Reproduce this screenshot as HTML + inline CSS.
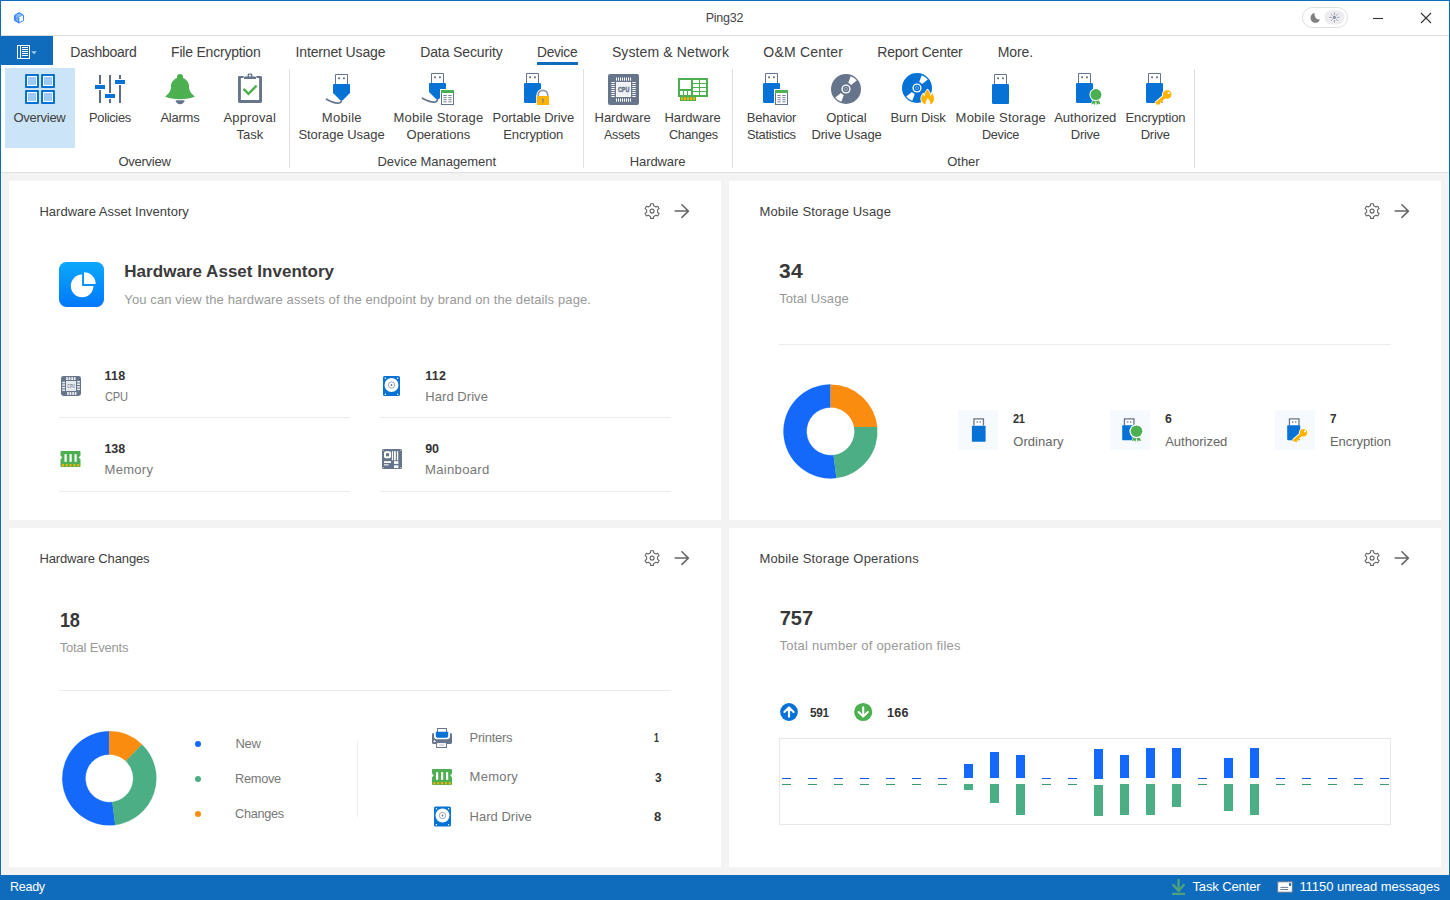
<!DOCTYPE html>
<html lang="en"><head><meta charset="utf-8"><title>Ping32</title>
<style>
html,body{margin:0;padding:0}
body{width:1450px;height:900px;position:relative;overflow:hidden;background:#f3f3f3;font-family:"Liberation Sans",sans-serif;font-size:13px}
svg{display:block;overflow:visible}
</style></head><body>
<div style="position:absolute;left:0px;top:0px;width:1450px;height:900px;background:#f3f3f3;"></div>
<div style="position:absolute;left:0px;top:0px;width:1450px;height:35px;background:#fff;"></div>
<div style="position:absolute;left:0px;top:35px;width:1450px;height:1px;background:#dcdcdc;"></div>
<div style="position:absolute;left:0px;top:36px;width:1450px;height:136px;background:#fff;"></div>
<div style="position:absolute;left:0px;top:172px;width:1450px;height:1px;background:#e0e0e0;"></div>
<div style="position:absolute;left:705.70px;top:8px;font-size:12.5px;line-height:20px;color:#444;white-space:nowrap;letter-spacing:-0.248px;">Ping32</div>
<svg style="position:absolute;left:0px;top:0px" width="40" height="35" viewBox="0 0 40 35"><g stroke-linejoin="round" transform="translate(19.05,17.85) scale(0.9) translate(-19,-17.8)"><path d="M19,12 L24,14.9 L19,17.8 L14,14.9 Z" fill="#69a7fb"/><path d="M14,14.9 L19,17.8 V23.6 L14,20.7 Z" fill="#4a91f8"/><path d="M15.6,16.9 L17.6,18 V21.6 L15.6,20.5 Z" fill="#a9ccfc"/><path d="M16.3,17.6 L17,18 V20.9 L16.3,20.5 Z" fill="#1f63d6"/><path d="M19,17.8 L24,14.9 V20.7 L19,23.6 Z" fill="#fff"/><path d="M16.4,13.5 L21.4,16.4 M21.6,13.5 L16.6,16.4" stroke="#cfe2fd" stroke-width="0.5" fill="none"/><path d="M19,12 L24,14.9 V20.7 L19,23.6 L14,20.7 V14.9 Z" fill="none" stroke="#2f7ff6" stroke-width="1.1"/><path d="M19,17.8 V23.6" stroke="#3b86f7" stroke-width="0.8" fill="none"/></g></svg>
<svg style="position:absolute;left:0px;top:0px" width="1450" height="35" viewBox="0 0 1450 35"><rect x="1302.5" y="7.5" width="45" height="20" rx="10" fill="#fff" stroke="#dedede"/><rect x="1324.5" y="10.2" width="20" height="14.3" rx="7.1" fill="#ededf0"/><path d="M1314.6,13 A4.9,4.9 0 1 0 1320,19.6 A5.2,5.2 0 0 1 1314.6,13 Z" fill="#808080"/><circle cx="1334.4" cy="17.4" r="1.55" fill="#8690a3"/><g stroke="#8690a3" stroke-width="0.8" stroke-linecap="round"><line x1="1337.30" y1="17.40" x2="1339.10" y2="17.40"/><line x1="1336.45" y1="19.45" x2="1337.72" y2="20.72"/><line x1="1334.40" y1="20.30" x2="1334.40" y2="22.10"/><line x1="1332.35" y1="19.45" x2="1331.08" y2="20.72"/><line x1="1331.50" y1="17.40" x2="1329.70" y2="17.40"/><line x1="1332.35" y1="15.35" x2="1331.08" y2="14.08"/><line x1="1334.40" y1="14.50" x2="1334.40" y2="12.70"/><line x1="1336.45" y1="15.35" x2="1337.72" y2="14.08"/></g></svg>
<svg style="position:absolute;left:0px;top:0px" width="1450" height="35" viewBox="0 0 1450 35"><g stroke="#333" stroke-width="1.1" fill="none"><line x1="1373" y1="18.5" x2="1383" y2="18.5"/><line x1="1421" y1="13" x2="1431" y2="23"/><line x1="1431" y1="13" x2="1421" y2="23"/></g></svg>
<div style="position:absolute;left:0px;top:36px;width:53px;height:29px;background:#0f6cbd;"></div>
<svg style="position:absolute;left:0px;top:0px" width="60" height="70" viewBox="0 0 60 70"><rect x="17.5" y="45.5" width="12" height="13" fill="none" stroke="#fff"/><line x1="20.5" y1="45.5" x2="20.5" y2="58.5" stroke="#fff"/><rect x="22" y="47" width="6" height="1" fill="#fff"/><rect x="22" y="49" width="6" height="1" fill="#fff"/><rect x="22" y="51" width="6" height="1" fill="#fff"/><rect x="22" y="53" width="6" height="1" fill="#fff"/><rect x="22" y="55" width="6" height="1" fill="#fff"/><path d="M31.2,51.3 H36.8 L34,54.2 Z" fill="#a8cbea"/></svg>
<div style="position:absolute;left:70.30px;top:42px;font-size:14px;line-height:20px;color:#404040;white-space:nowrap;letter-spacing:-0.258px;">Dashboard</div>
<div style="position:absolute;left:171.10px;top:42px;font-size:14px;line-height:20px;color:#404040;white-space:nowrap;letter-spacing:-0.215px;">File Encryption</div>
<div style="position:absolute;left:295.50px;top:42px;font-size:14px;line-height:20px;color:#404040;white-space:nowrap;letter-spacing:-0.142px;">Internet Usage</div>
<div style="position:absolute;left:420.20px;top:42px;font-size:14px;line-height:20px;color:#404040;white-space:nowrap;letter-spacing:-0.114px;">Data Security</div>
<div style="position:absolute;left:537.40px;top:42px;font-size:14px;line-height:20px;color:#404040;white-space:nowrap;letter-spacing:-0.300px;transform:scaleX(0.9813);transform-origin:0 0;">Device</div>
<div style="position:absolute;left:611.90px;top:42px;font-size:14px;line-height:20px;color:#404040;white-space:nowrap;letter-spacing:0.125px;">System &amp; Network</div>
<div style="position:absolute;left:763.30px;top:42px;font-size:14px;line-height:20px;color:#404040;white-space:nowrap;letter-spacing:0.203px;">O&amp;M Center</div>
<div style="position:absolute;left:877.30px;top:42px;font-size:14px;line-height:20px;color:#404040;white-space:nowrap;letter-spacing:-0.218px;">Report Center</div>
<div style="position:absolute;left:997.80px;top:42px;font-size:14px;line-height:20px;color:#404040;white-space:nowrap;letter-spacing:-0.142px;">More.</div>
<div style="position:absolute;left:537px;top:62px;width:41px;height:3px;background:#0f6cbd;"></div>
<div style="position:absolute;left:5px;top:68px;width:70px;height:80px;background:#cce4f7;"></div>
<div style="position:absolute;left:289px;top:69px;width:1px;height:99px;background:#e1e1e1;"></div>
<div style="position:absolute;left:583px;top:69px;width:1px;height:99px;background:#e1e1e1;"></div>
<div style="position:absolute;left:732px;top:69px;width:1px;height:99px;background:#e1e1e1;"></div>
<div style="position:absolute;left:1194px;top:69px;width:1px;height:99px;background:#e1e1e1;"></div>
<div style="position:absolute;left:13.40px;top:107px;font-size:13px;line-height:21px;color:#404040;white-space:nowrap;letter-spacing:-0.259px;">Overview</div>
<div style="position:absolute;left:88.60px;top:107px;font-size:13px;line-height:21px;color:#404040;white-space:nowrap;letter-spacing:-0.300px;transform:scaleX(0.9886);transform-origin:0 0;">Policies</div>
<div style="position:absolute;left:160.40px;top:107px;font-size:13px;line-height:21px;color:#404040;white-space:nowrap;letter-spacing:-0.226px;">Alarms</div>
<div style="position:absolute;left:223.50px;top:107px;font-size:13px;line-height:21px;color:#404040;white-space:nowrap;letter-spacing:0.145px;">Approval</div>
<div style="position:absolute;left:236.50px;top:124px;font-size:13px;line-height:21px;color:#404040;white-space:nowrap;letter-spacing:-0.027px;">Task</div>
<div style="position:absolute;left:321.80px;top:107px;font-size:13px;line-height:21px;color:#404040;white-space:nowrap;letter-spacing:0.300px;">Mobile</div>
<div style="position:absolute;left:298.40px;top:124px;font-size:13px;line-height:21px;color:#404040;white-space:nowrap;letter-spacing:-0.034px;">Storage Usage</div>
<div style="position:absolute;left:393.60px;top:107px;font-size:13px;line-height:21px;color:#404040;white-space:nowrap;letter-spacing:0.167px;">Mobile Storage</div>
<div style="position:absolute;left:406.50px;top:124px;font-size:13px;line-height:21px;color:#404040;white-space:nowrap;letter-spacing:0.014px;">Operations</div>
<div style="position:absolute;left:492.50px;top:107px;font-size:13px;line-height:21px;color:#404040;white-space:nowrap;letter-spacing:-0.043px;">Portable Drive</div>
<div style="position:absolute;left:503.30px;top:124px;font-size:13px;line-height:21px;color:#404040;white-space:nowrap;letter-spacing:-0.158px;">Encryption</div>
<div style="position:absolute;left:594.50px;top:107px;font-size:13px;line-height:21px;color:#404040;white-space:nowrap;letter-spacing:-0.008px;">Hardware</div>
<div style="position:absolute;left:604.40px;top:124px;font-size:13px;line-height:21px;color:#404040;white-space:nowrap;letter-spacing:-0.300px;transform:scaleX(0.9600);transform-origin:0 0;">Assets</div>
<div style="position:absolute;left:664.40px;top:107px;font-size:13px;line-height:21px;color:#404040;white-space:nowrap;letter-spacing:-0.008px;">Hardware</div>
<div style="position:absolute;left:668.60px;top:124px;font-size:13px;line-height:21px;color:#404040;white-space:nowrap;letter-spacing:-0.300px;transform:scaleX(0.9748);transform-origin:0 0;">Changes</div>
<div style="position:absolute;left:746.80px;top:107px;font-size:13px;line-height:21px;color:#404040;white-space:nowrap;letter-spacing:-0.241px;">Behavior</div>
<div style="position:absolute;left:747.20px;top:124px;font-size:13px;line-height:21px;color:#404040;white-space:nowrap;letter-spacing:-0.300px;transform:scaleX(0.9939);transform-origin:0 0;">Statistics</div>
<div style="position:absolute;left:826.20px;top:107px;font-size:13px;line-height:21px;color:#404040;white-space:nowrap;letter-spacing:-0.005px;">Optical</div>
<div style="position:absolute;left:811.40px;top:124px;font-size:13px;line-height:21px;color:#404040;white-space:nowrap;letter-spacing:-0.120px;">Drive Usage</div>
<div style="position:absolute;left:890.60px;top:107px;font-size:13px;line-height:21px;color:#404040;white-space:nowrap;letter-spacing:-0.140px;">Burn Disk</div>
<div style="position:absolute;left:955.60px;top:107px;font-size:13px;line-height:21px;color:#404040;white-space:nowrap;letter-spacing:0.213px;">Mobile Storage</div>
<div style="position:absolute;left:981.50px;top:124px;font-size:13px;line-height:21px;color:#404040;white-space:nowrap;letter-spacing:-0.300px;transform:scaleX(0.9734);transform-origin:0 0;">Device</div>
<div style="position:absolute;left:1054.20px;top:107px;font-size:13px;line-height:21px;color:#404040;white-space:nowrap;">Authorized</div>
<div style="position:absolute;left:1070.80px;top:124px;font-size:13px;line-height:21px;color:#404040;white-space:nowrap;letter-spacing:-0.289px;">Drive</div>
<div style="position:absolute;left:1125.60px;top:107px;font-size:13px;line-height:21px;color:#404040;white-space:nowrap;letter-spacing:-0.158px;">Encryption</div>
<div style="position:absolute;left:1140.70px;top:124px;font-size:13px;line-height:21px;color:#404040;white-space:nowrap;letter-spacing:-0.264px;">Drive</div>
<div style="position:absolute;left:118.40px;top:151px;font-size:13px;line-height:21px;color:#404040;white-space:nowrap;letter-spacing:-0.244px;">Overview</div>
<div style="position:absolute;left:377.50px;top:151px;font-size:13px;line-height:21px;color:#404040;white-space:nowrap;letter-spacing:-0.044px;">Device Management</div>
<div style="position:absolute;left:629.70px;top:151px;font-size:13px;line-height:21px;color:#404040;white-space:nowrap;letter-spacing:-0.079px;">Hardware</div>
<div style="position:absolute;left:947.30px;top:151px;font-size:13px;line-height:21px;color:#404040;white-space:nowrap;letter-spacing:-0.050px;">Other</div>
<svg style="position:absolute;left:0px;top:0px" width="1450" height="172" viewBox="0 0 1450 172"><rect x="25" y="74" width="14" height="14" rx="0.8" fill="#0672d6"/><rect x="27" y="76" width="10" height="10" fill="#fff"/><rect x="28" y="77" width="8" height="8" fill="#9bcbfb"/><rect x="41" y="74" width="14" height="14" rx="0.8" fill="#0672d6"/><rect x="43" y="76" width="10" height="10" fill="#fff"/><rect x="44" y="77" width="8" height="8" fill="#9bcbfb"/><rect x="25" y="90" width="14" height="14" rx="0.8" fill="#0672d6"/><rect x="27" y="92" width="10" height="10" fill="#fff"/><rect x="28" y="93" width="8" height="8" fill="#9bcbfb"/><rect x="41" y="90" width="14" height="14" rx="0.8" fill="#0672d6"/><rect x="43" y="92" width="10" height="10" fill="#fff"/><rect x="44" y="93" width="8" height="8" fill="#9bcbfb"/><g fill="#5d6b82"><rect x="99" y="75" width="2" height="9"/><rect x="99" y="90" width="2" height="13"/><rect x="109" y="75" width="2" height="18"/><rect x="109" y="99" width="2" height="4"/><rect x="119" y="75" width="2" height="4"/><rect x="119" y="85" width="2" height="18"/></g><g fill="#0672d6"><rect x="95" y="85" width="10" height="4"/><rect x="105" y="94" width="10" height="4"/><rect x="115" y="80" width="10" height="4"/></g><path d="M175.6,100.2 H184.6 A4.5,4 0 0 1 175.6,100.2 Z" fill="#66758c"/><path d="M180,74 C181.8,74 183.1,75.3 183.1,77 C183.1,77.4 183,77.8 182.9,78.1 C186.5,79.3 189,82.5 189,86.5 C189,91 191,93.5 195,96.6 C191,98.4 185.5,99.3 180,99.3 C174.5,99.3 169,98.4 165,96.6 C169,93.5 171,91 171,86.5 C171,82.5 173.5,79.3 177.1,78.1 C177,77.8 176.9,77.4 176.9,77 C176.9,75.3 178.2,74 180,74 Z" fill="#4caf50"/><path fill-rule="evenodd" d="M239.4,76 H260.6 Q262,76 262,77.4 V101.6 Q262,103 260.6,103 H239.4 Q238,103 238,101.6 V77.4 Q238,76 239.4,76 Z M240.9,78 V100 H259.1 V78 Z" fill="#66758c"/><path d="M244,79 V77.8 Q244,76.5 245.4,76.5 H247.6 V74.8 Q247.6,73.4 249,73.4 H251 Q252.4,73.4 252.4,74.8 V76.5 H254.6 Q256,76.5 256,77.8 V79 Z" fill="#66758c" stroke="#fff" stroke-width="1.3" paint-order="stroke"/><rect x="249.1" y="74.7" width="1.8" height="1.8" fill="#fff"/><path d="M243.6,88.8 L248.4,93.8 L256.6,85.6" fill="none" stroke="#4caf50" stroke-width="2.4"/><path d="M341.5,100 C341.6,104.2 336,104.5 326.5,99.2" fill="none" stroke="#66758c" stroke-width="1.8" stroke-linecap="round"/><path d="M335.5,84 V74.5 H347.5 V84" fill="#fff" stroke="#66758c" stroke-width="1"/><rect x="338.1" y="77.4" width="1.9" height="1.8" fill="#66758c"/><rect x="343.0" y="77.4" width="1.9" height="1.8" fill="#66758c"/><path d="M334,84 H349 Q350,84 350,85 V93 L343,100 H340 L333,93 V85 Q333,84 334,84 Z" fill="#0672d6"/><path d="M437.5,99 C437.6,103.2 432,103.5 422.5,98.2" fill="none" stroke="#66758c" stroke-width="1.8" stroke-linecap="round"/><path d="M431.5,83 V73.5 H443.5 V83" fill="#fff" stroke="#66758c" stroke-width="1"/><rect x="434.1" y="76.4" width="1.9" height="1.8" fill="#66758c"/><rect x="439.0" y="76.4" width="1.9" height="1.8" fill="#66758c"/><path d="M430,83 H445 Q446,83 446,84 V92 L439,99 H436 L429,92 V84 Q429,83 430,83 Z" fill="#0672d6"/><rect x="440" y="89" width="15" height="17" fill="#fff"/><rect x="441.5" y="90.5" width="12" height="14" fill="#fff" stroke="#66758c" stroke-width="1"/><rect x="441" y="90" width="13" height="3" fill="#4caf50"/><rect x="443.4" y="95.1" width="3.3" height="0.9" fill="#66758c"/><rect x="448.3" y="95.1" width="3.3" height="0.9" fill="#66758c"/><rect x="443.4" y="97.19999999999999" width="3.3" height="0.9" fill="#66758c"/><rect x="448.3" y="97.19999999999999" width="3.3" height="0.9" fill="#66758c"/><rect x="443.4" y="99.3" width="3.3" height="0.9" fill="#66758c"/><rect x="448.3" y="99.3" width="3.3" height="0.9" fill="#66758c"/><rect x="443.4" y="101.39999999999999" width="3.3" height="0.9" fill="#66758c"/><rect x="448.3" y="101.39999999999999" width="3.3" height="0.9" fill="#66758c"/><path d="M526.5,83 V73.5 H538.5 V83" fill="#fff" stroke="#66758c" stroke-width="1"/><rect x="529.1" y="76.4" width="1.9" height="1.8" fill="#66758c"/><rect x="534.0" y="76.4" width="1.9" height="1.8" fill="#66758c"/><rect x="524" y="83" width="17" height="20" rx="1.2" fill="#0672d6"/><path d="M538.3,96.5 V95 A4.7,4.7 0 0 1 547.7,95 V96.5" fill="none" stroke="#fff" stroke-width="3.4"/><rect x="536.2" y="95.2" width="13.6" height="10.6" fill="#fff"/><path d="M538.3,96.5 V95 A4.7,4.7 0 0 1 547.7,95 V96.5 Z" fill="#fff"/><path d="M538.3,96.5 V95 A4.7,4.7 0 0 1 547.7,95 V96.5" fill="none" stroke="#8f9aab" stroke-width="1.7"/><rect x="537" y="96" width="12" height="9" fill="#ffb300"/><circle cx="543" cy="99.4" r="0.9" fill="#7d8797"/><rect x="542.4" y="99.6" width="1.2" height="3.3" fill="#7d8797"/><g transform="translate(608,74) scale(1.0)"><rect x="0" y="0" width="31" height="31" rx="2" fill="#66758c"/><rect x="8" y="8" width="15" height="15" fill="#fff"/><rect x="8.4" y="8.4" width="14.2" height="14.2" fill="#f0f1f2"/><rect x="8" y="3.2" width="1" height="3.6" rx="0.5" fill="#fff"/><rect x="8" y="24.2" width="1" height="3.6" rx="0.5" fill="#fff"/><rect x="3.2" y="8" width="3.6" height="1" rx="0.5" fill="#fff"/><rect x="24.2" y="8" width="3.6" height="1" rx="0.5" fill="#fff"/><rect x="10" y="3.2" width="1" height="3.6" rx="0.5" fill="#fff"/><rect x="10" y="24.2" width="1" height="3.6" rx="0.5" fill="#fff"/><rect x="3.2" y="10" width="3.6" height="1" rx="0.5" fill="#fff"/><rect x="24.2" y="10" width="3.6" height="1" rx="0.5" fill="#fff"/><rect x="12" y="3.2" width="1" height="3.6" rx="0.5" fill="#fff"/><rect x="12" y="24.2" width="1" height="3.6" rx="0.5" fill="#fff"/><rect x="3.2" y="12" width="3.6" height="1" rx="0.5" fill="#fff"/><rect x="24.2" y="12" width="3.6" height="1" rx="0.5" fill="#fff"/><rect x="14" y="3.2" width="1" height="3.6" rx="0.5" fill="#fff"/><rect x="14" y="24.2" width="1" height="3.6" rx="0.5" fill="#fff"/><rect x="3.2" y="14" width="3.6" height="1" rx="0.5" fill="#fff"/><rect x="24.2" y="14" width="3.6" height="1" rx="0.5" fill="#fff"/><rect x="16" y="3.2" width="1" height="3.6" rx="0.5" fill="#fff"/><rect x="16" y="24.2" width="1" height="3.6" rx="0.5" fill="#fff"/><rect x="3.2" y="16" width="3.6" height="1" rx="0.5" fill="#fff"/><rect x="24.2" y="16" width="3.6" height="1" rx="0.5" fill="#fff"/><rect x="18" y="3.2" width="1" height="3.6" rx="0.5" fill="#fff"/><rect x="18" y="24.2" width="1" height="3.6" rx="0.5" fill="#fff"/><rect x="3.2" y="18" width="3.6" height="1" rx="0.5" fill="#fff"/><rect x="24.2" y="18" width="3.6" height="1" rx="0.5" fill="#fff"/><rect x="20" y="3.2" width="1" height="3.6" rx="0.5" fill="#fff"/><rect x="20" y="24.2" width="1" height="3.6" rx="0.5" fill="#fff"/><rect x="3.2" y="20" width="3.6" height="1" rx="0.5" fill="#fff"/><rect x="24.2" y="20" width="3.6" height="1" rx="0.5" fill="#fff"/><rect x="22" y="3.2" width="1" height="3.6" rx="0.5" fill="#fff"/><rect x="22" y="24.2" width="1" height="3.6" rx="0.5" fill="#fff"/><rect x="3.2" y="22" width="3.6" height="1" rx="0.5" fill="#fff"/><rect x="24.2" y="22" width="3.6" height="1" rx="0.5" fill="#fff"/><text x="15.6" y="18" font-family="Liberation Sans, sans-serif" font-size="7" font-weight="700" text-anchor="middle" fill="#66758c" stroke="#66758c" stroke-width="0.45" textLength="11.4" lengthAdjust="spacingAndGlyphs">CPU</text></g><rect x="678" y="78" width="30" height="19" fill="#4caf50"/><rect x="680" y="97" width="16" height="4" fill="#4caf50"/><rect x="680" y="80" width="11" height="9" fill="#fff"/><rect x="680" y="91" width="3" height="4" fill="#fff"/><rect x="684" y="91" width="3" height="4" fill="#fff"/><rect x="688" y="91" width="3" height="4" fill="#fff"/><rect x="693" y="80" width="6" height="3" fill="#fff"/><rect x="700" y="80" width="6" height="3" fill="#fff"/><rect x="693" y="84" width="6" height="3" fill="#fff"/><rect x="700" y="84" width="6" height="3" fill="#fff"/><rect x="693" y="88" width="6" height="3" fill="#fff"/><rect x="700" y="88" width="6" height="3" fill="#fff"/><rect x="693" y="92" width="6" height="3" fill="#fff"/><rect x="700" y="92" width="6" height="3" fill="#fff"/><rect x="681" y="97.3" width="2" height="2.7" fill="#ffb300"/><rect x="684" y="97.3" width="2" height="2.7" fill="#ffb300"/><rect x="687" y="97.3" width="2" height="2.7" fill="#ffb300"/><rect x="690" y="97.3" width="2" height="2.7" fill="#ffb300"/><rect x="693" y="97.3" width="2" height="2.7" fill="#ffb300"/><path d="M765.5,83 V73.5 H777.5 V83" fill="#fff" stroke="#66758c" stroke-width="1"/><rect x="768.1" y="76.4" width="1.9" height="1.8" fill="#66758c"/><rect x="773.0" y="76.4" width="1.9" height="1.8" fill="#66758c"/><rect x="763" y="83" width="17" height="20" rx="1.2" fill="#0672d6"/><rect x="774" y="89" width="15" height="17" fill="#fff"/><rect x="775.5" y="90.5" width="12" height="14" fill="#fff" stroke="#66758c" stroke-width="1"/><rect x="775" y="90" width="13" height="3" fill="#4caf50"/><rect x="777.4" y="95.1" width="3.3" height="0.9" fill="#66758c"/><rect x="782.3" y="95.1" width="3.3" height="0.9" fill="#66758c"/><rect x="777.4" y="97.19999999999999" width="3.3" height="0.9" fill="#66758c"/><rect x="782.3" y="97.19999999999999" width="3.3" height="0.9" fill="#66758c"/><rect x="777.4" y="99.3" width="3.3" height="0.9" fill="#66758c"/><rect x="782.3" y="99.3" width="3.3" height="0.9" fill="#66758c"/><rect x="777.4" y="101.39999999999999" width="3.3" height="0.9" fill="#66758c"/><rect x="782.3" y="101.39999999999999" width="3.3" height="0.9" fill="#66758c"/><circle cx="846" cy="89" r="15" fill="#66758c"/><path d="M848.19,82.99 L850.69,76.13 A13.7,13.7 0 0 1 856.80,80.57 L851.04,85.06 A6.4,6.4 0 0 0 848.19,82.99 Z" fill="#fff"/><path d="M843.81,95.01 L841.31,101.87 A13.7,13.7 0 0 1 835.20,97.43 L840.96,92.94 A6.4,6.4 0 0 0 843.81,95.01 Z" fill="#fff"/><circle cx="846" cy="89" r="4.6" fill="#fff"/><circle cx="846" cy="89" r="3.2" fill="#66758c"/><circle cx="846" cy="89" r="1.6" fill="none" stroke="#fff" stroke-opacity="0.55" stroke-width="0.7"/><circle cx="917" cy="88" r="15" fill="#0672d6"/><path d="M919.19,81.99 L921.69,75.13 A13.7,13.7 0 0 1 927.80,79.57 L922.04,84.06 A6.4,6.4 0 0 0 919.19,81.99 Z" fill="#fff"/><path d="M914.81,94.01 L912.31,100.87 A13.7,13.7 0 0 1 906.20,96.43 L911.96,91.94 A6.4,6.4 0 0 0 914.81,94.01 Z" fill="#fff"/><circle cx="917" cy="88" r="4.6" fill="#fff"/><circle cx="917" cy="88" r="3.2" fill="#0672d6"/><circle cx="917" cy="88" r="1.6" fill="none" stroke="#fff" stroke-opacity="0.55" stroke-width="0.7"/><path d="M927.5,89.5 C929.3,91.7 930.4,94.1 930.6,96.5 C931.4,95.5 931.8,94.3 932,93.1 C933.6,95.5 934.4,98.1 933.8,100.5 C933.2,102.9 931.6,104.1 930,104.5 C930.8,102.9 930,100.5 927.6,98.1 C926.6,100.1 925.2,102.1 925.8,104.5 C923.6,103.9 921.8,102.5 921.3,100.1 C920.8,97.7 921.6,95.5 923.2,93.7 C923.4,94.9 923.8,95.9 924.6,96.7 C924.6,94.1 925.6,91.5 927.5,89.5 Z" fill="#ffb300" stroke="#fff" stroke-width="1.6" paint-order="stroke" stroke-linejoin="round"/><path d="M994.5,84 V74.5 H1006.5 V84" fill="#fff" stroke="#66758c" stroke-width="1"/><rect x="997.1" y="77.4" width="1.9" height="1.8" fill="#66758c"/><rect x="1002.0" y="77.4" width="1.9" height="1.8" fill="#66758c"/><rect x="992" y="84" width="17" height="20" rx="1.2" fill="#0672d6"/><path d="M1078.5,83 V73.5 H1090.5 V83" fill="#fff" stroke="#66758c" stroke-width="1"/><rect x="1081.1" y="76.4" width="1.9" height="1.8" fill="#66758c"/><rect x="1086.0" y="76.4" width="1.9" height="1.8" fill="#66758c"/><rect x="1076" y="83" width="17" height="20" rx="1.2" fill="#0672d6"/><path d="M1093.3000000000002,98.6 L1091.3000000000002,104.6 L1093.6000000000001,103.39999999999999 L1094.9,105.19999999999999 L1096.1000000000001,99.6 Z M1098.5,98.6 L1100.5,104.6 L1098.2,103.39999999999999 L1096.9,105.19999999999999 L1095.7,99.6 Z" fill="#4caf50" stroke="#fff" stroke-width="1.2" paint-order="stroke"/><circle cx="1095.9" cy="94.6" r="6.5" fill="#fff"/><circle cx="1095.9" cy="94.6" r="5.5" fill="#4caf50"/><path d="M1148.5,83 V73.5 H1160.5 V83" fill="#fff" stroke="#66758c" stroke-width="1"/><rect x="1151.1" y="76.4" width="1.9" height="1.8" fill="#66758c"/><rect x="1156.0" y="76.4" width="1.9" height="1.8" fill="#66758c"/><rect x="1146" y="83" width="17" height="20" rx="1.2" fill="#0672d6"/><g stroke-linecap="butt"><circle cx="1167.2" cy="94.5" r="5.3" fill="#fff"/><line x1="1167.2" y1="94.5" x2="1156.2" y2="104" stroke="#fff" stroke-width="5"/><line x1="1167.2" y1="94.5" x2="1156.2" y2="104" stroke="#ffb300" stroke-width="3"/><line x1="1160.38" y1="100.39" x2="1162.08" y2="102.36" stroke="#ffb300" stroke-width="1.6"/><line x1="1158.18" y1="102.29" x2="1159.88" y2="104.26" stroke="#ffb300" stroke-width="1.6"/><circle cx="1167.2" cy="94.5" r="4.3" fill="#ffb300"/><circle cx="1168.7" cy="93.0" r="1.1" fill="#fff"/></g></svg>
<div style="position:absolute;left:9px;top:181px;width:712px;height:339px;background:#fff;"></div>
<svg style="position:absolute;left:0px;top:0px" width="1450" height="900" viewBox="0 0 1450 900"><path d="M650.46,205.74 L650.68,203.79 L653.52,203.79 L653.74,205.74 L655.92,207.00 L657.72,206.21 L659.14,208.67 L657.56,209.84 L657.56,212.36 L659.14,213.53 L657.72,215.99 L655.92,215.20 L653.74,216.46 L653.52,218.41 L650.68,218.41 L650.46,216.46 L648.28,215.20 L646.48,215.99 L645.06,213.53 L646.64,212.36 L646.64,209.84 L645.06,208.67 L646.48,206.21 L648.28,207.00 Z" fill="none" stroke="#666" stroke-width="1.1" stroke-linejoin="round"/><circle cx="652.1" cy="211.1" r="2" fill="none" stroke="#666" stroke-width="1.1"/></svg>
<svg style="position:absolute;left:0px;top:0px" width="1450" height="900" viewBox="0 0 1450 900"><path d="M675.1,211.1 H688.3 M681.9,204.8 L688.4,211.1 L681.9,217.4" fill="none" stroke="#666" stroke-width="1.5" stroke-linecap="round" stroke-linejoin="round"/></svg>
<div style="position:absolute;left:729px;top:181px;width:712px;height:339px;background:#fff;"></div>
<svg style="position:absolute;left:0px;top:0px" width="1450" height="900" viewBox="0 0 1450 900"><path d="M1370.46,205.74 L1370.68,203.79 L1373.52,203.79 L1373.74,205.74 L1375.92,207.00 L1377.72,206.21 L1379.14,208.67 L1377.56,209.84 L1377.56,212.36 L1379.14,213.53 L1377.72,215.99 L1375.92,215.20 L1373.74,216.46 L1373.52,218.41 L1370.68,218.41 L1370.46,216.46 L1368.28,215.20 L1366.48,215.99 L1365.06,213.53 L1366.64,212.36 L1366.64,209.84 L1365.06,208.67 L1366.48,206.21 L1368.28,207.00 Z" fill="none" stroke="#666" stroke-width="1.1" stroke-linejoin="round"/><circle cx="1372.1" cy="211.1" r="2" fill="none" stroke="#666" stroke-width="1.1"/></svg>
<svg style="position:absolute;left:0px;top:0px" width="1450" height="900" viewBox="0 0 1450 900"><path d="M1395.1,211.1 H1408.3 M1401.9,204.8 L1408.4,211.1 L1401.9,217.4" fill="none" stroke="#666" stroke-width="1.5" stroke-linecap="round" stroke-linejoin="round"/></svg>
<div style="position:absolute;left:9px;top:528px;width:712px;height:339px;background:#fff;"></div>
<svg style="position:absolute;left:0px;top:0px" width="1450" height="900" viewBox="0 0 1450 900"><path d="M650.46,552.74 L650.68,550.79 L653.52,550.79 L653.74,552.74 L655.92,554.00 L657.72,553.21 L659.14,555.67 L657.56,556.84 L657.56,559.36 L659.14,560.53 L657.72,562.99 L655.92,562.20 L653.74,563.46 L653.52,565.41 L650.68,565.41 L650.46,563.46 L648.28,562.20 L646.48,562.99 L645.06,560.53 L646.64,559.36 L646.64,556.84 L645.06,555.67 L646.48,553.21 L648.28,554.00 Z" fill="none" stroke="#666" stroke-width="1.1" stroke-linejoin="round"/><circle cx="652.1" cy="558.1" r="2" fill="none" stroke="#666" stroke-width="1.1"/></svg>
<svg style="position:absolute;left:0px;top:0px" width="1450" height="900" viewBox="0 0 1450 900"><path d="M675.1,558.1 H688.3 M681.9,551.8 L688.4,558.1 L681.9,564.4" fill="none" stroke="#666" stroke-width="1.5" stroke-linecap="round" stroke-linejoin="round"/></svg>
<div style="position:absolute;left:729px;top:528px;width:712px;height:339px;background:#fff;"></div>
<svg style="position:absolute;left:0px;top:0px" width="1450" height="900" viewBox="0 0 1450 900"><path d="M1370.46,552.74 L1370.68,550.79 L1373.52,550.79 L1373.74,552.74 L1375.92,554.00 L1377.72,553.21 L1379.14,555.67 L1377.56,556.84 L1377.56,559.36 L1379.14,560.53 L1377.72,562.99 L1375.92,562.20 L1373.74,563.46 L1373.52,565.41 L1370.68,565.41 L1370.46,563.46 L1368.28,562.20 L1366.48,562.99 L1365.06,560.53 L1366.64,559.36 L1366.64,556.84 L1365.06,555.67 L1366.48,553.21 L1368.28,554.00 Z" fill="none" stroke="#666" stroke-width="1.1" stroke-linejoin="round"/><circle cx="1372.1" cy="558.1" r="2" fill="none" stroke="#666" stroke-width="1.1"/></svg>
<svg style="position:absolute;left:0px;top:0px" width="1450" height="900" viewBox="0 0 1450 900"><path d="M1395.1,558.1 H1408.3 M1401.9,551.8 L1408.4,558.1 L1401.9,564.4" fill="none" stroke="#666" stroke-width="1.5" stroke-linecap="round" stroke-linejoin="round"/></svg>
<div style="position:absolute;left:39.40px;top:201px;font-size:13px;line-height:21px;color:#404040;white-space:nowrap;letter-spacing:0.024px;">Hardware Asset Inventory</div>
<svg style="position:absolute;left:59px;top:262px" width="45" height="45" viewBox="0 0 45 45"><defs><linearGradient id="pg" x1="0" y1="0" x2="0" y2="1"><stop offset="0" stop-color="#0ba8fb"/><stop offset="1" stop-color="#0078fb"/></linearGradient></defs><rect x="0" y="0" width="45" height="45" rx="7.5" fill="url(#pg)"/><path d="M23.1,12.6 A11.3,11.3 0 1 0 34.4,23.9 H23.1 Z" fill="#fff"/><path d="M25,10.2 A11.7,11.7 0 0 1 36.7,21.9 H25 Z" fill="#fff"/></svg>
<div style="position:absolute;left:124.30px;top:259px;font-size:17px;line-height:25px;color:#3a3a3a;white-space:nowrap;font-weight:700;letter-spacing:0.026px;">Hardware Asset Inventory</div>
<div style="position:absolute;left:124.30px;top:289px;font-size:13px;line-height:21px;color:#999;white-space:nowrap;letter-spacing:0.116px;">You can view the hardware assets of the endpoint by brand on the details page.</div>
<div style="position:absolute;left:104.50px;top:366px;font-size:12.5px;line-height:20px;color:#333;white-space:nowrap;font-weight:700;letter-spacing:0.256px;">118</div>
<div style="position:absolute;left:104.50px;top:386px;font-size:13px;line-height:21px;color:#777;white-space:nowrap;letter-spacing:-0.300px;transform:scaleX(0.8535);transform-origin:0 0;">CPU</div>
<div style="position:absolute;left:425.30px;top:366px;font-size:12.5px;line-height:20px;color:#333;white-space:nowrap;font-weight:700;letter-spacing:0.206px;">112</div>
<div style="position:absolute;left:425.30px;top:386px;font-size:13px;line-height:21px;color:#777;white-space:nowrap;letter-spacing:0.051px;">Hard Drive</div>
<div style="position:absolute;left:104.50px;top:439px;font-size:12.5px;line-height:20px;color:#333;white-space:nowrap;font-weight:700;letter-spacing:-0.087px;">138</div>
<div style="position:absolute;left:104.50px;top:459px;font-size:13px;line-height:21px;color:#777;white-space:nowrap;letter-spacing:0.300px;">Memory</div>
<div style="position:absolute;left:425.30px;top:439px;font-size:12.5px;line-height:20px;color:#333;white-space:nowrap;font-weight:700;letter-spacing:-0.175px;">90</div>
<div style="position:absolute;left:425.30px;top:459px;font-size:13px;line-height:21px;color:#777;white-space:nowrap;letter-spacing:0.300px;transform:scaleX(1.0074);transform-origin:0 0;">Mainboard</div>
<div style="position:absolute;left:59px;top:417px;width:291px;height:1px;background:#ebebeb;"></div>
<div style="position:absolute;left:59px;top:491px;width:291px;height:1px;background:#ebebeb;"></div>
<div style="position:absolute;left:380px;top:417px;width:291px;height:1px;background:#ebebeb;"></div>
<div style="position:absolute;left:380px;top:491px;width:291px;height:1px;background:#ebebeb;"></div>
<svg style="position:absolute;left:0px;top:0px" width="1450" height="900" viewBox="0 0 1450 900"><g transform="translate(61,376)"><rect x="0" y="0" width="20" height="20" rx="2.4" fill="#66758c"/><rect x="5" y="5" width="10" height="10" fill="#e6e9ed"/><rect x="5.2" y="1.2" width="1.7" height="2.8" fill="#fff" fill-opacity="0.92"/><rect x="6.1000000000000005" y="16.1" width="1.7" height="2.8" fill="#fff" fill-opacity="0.92"/><rect x="1.2" y="5.8" width="2.8" height="1.5" fill="#fff" fill-opacity="0.92"/><rect x="16.1" y="5.0" width="2.8" height="1.5" fill="#fff" fill-opacity="0.92"/><rect x="7.7" y="1.2" width="1.7" height="2.8" fill="#fff" fill-opacity="0.92"/><rect x="8.6" y="16.1" width="1.7" height="2.8" fill="#fff" fill-opacity="0.92"/><rect x="1.2" y="8.3" width="2.8" height="1.5" fill="#fff" fill-opacity="0.92"/><rect x="16.1" y="7.5" width="2.8" height="1.5" fill="#fff" fill-opacity="0.92"/><rect x="10.3" y="1.2" width="1.7" height="2.8" fill="#fff" fill-opacity="0.92"/><rect x="11.200000000000001" y="16.1" width="1.7" height="2.8" fill="#fff" fill-opacity="0.92"/><rect x="1.2" y="10.9" width="2.8" height="1.5" fill="#fff" fill-opacity="0.92"/><rect x="16.1" y="10.100000000000001" width="2.8" height="1.5" fill="#fff" fill-opacity="0.92"/><rect x="12.8" y="1.2" width="1.7" height="2.8" fill="#fff" fill-opacity="0.92"/><rect x="13.700000000000001" y="16.1" width="1.7" height="2.8" fill="#fff" fill-opacity="0.92"/><rect x="1.2" y="13.4" width="2.8" height="1.5" fill="#fff" fill-opacity="0.92"/><rect x="16.1" y="12.600000000000001" width="2.8" height="1.5" fill="#fff" fill-opacity="0.92"/><text x="10.1" y="11.7" font-family="Liberation Sans, sans-serif" font-size="4.8" font-weight="700" text-anchor="middle" fill="#66758c" fill-opacity="0.85" textLength="7.6" lengthAdjust="spacingAndGlyphs">CPU</text></g></svg>
<svg style="position:absolute;left:0px;top:0px" width="1450" height="900" viewBox="0 0 1450 900"><g transform="translate(383,376)"><rect x="0" y="0" width="17" height="20" rx="1.6" fill="#0672d6"/><circle cx="8.5" cy="9" r="7" fill="#fff"/><circle cx="8.5" cy="9" r="3.2" fill="none" stroke="#66758c" stroke-width="0.6"/><circle cx="8.5" cy="9" r="0.9" fill="#66758c"/><circle cx="2.4" cy="2.2" r="0.75" fill="#fff"/><circle cx="14.6" cy="2.2" r="0.75" fill="#fff"/><circle cx="2.4" cy="18.2" r="0.75" fill="#fff"/><circle cx="14.6" cy="18.2" r="0.75" fill="#fff"/></g></svg>
<svg style="position:absolute;left:0px;top:0px" width="1450" height="900" viewBox="0 0 1450 900"><g transform="translate(60.5,451)"><path d="M1,0 H19 Q20,0 20,1 V4.6 L18.2,6.4 L20,8.2 V15 Q20,16 19,16 H1 Q0,16 0,15 V8.2 L1.8,6.4 L0,4.6 V1 Q0,0 1,0 Z" fill="#4caf50"/><rect x="4" y="3.2" width="2.2" height="7.6" fill="#fff"/><rect x="9" y="3.2" width="2.2" height="7.6" fill="#fff"/><rect x="14" y="3.2" width="2.2" height="7.6" fill="#fff"/><rect x="1.3" y="13.2" width="2.2" height="2.2" fill="#ffb300"/><rect x="5.1" y="13.2" width="2.2" height="2.2" fill="#ffb300"/><rect x="8.9" y="13.2" width="2.2" height="2.2" fill="#ffb300"/><rect x="12.8" y="13.2" width="2.2" height="2.2" fill="#ffb300"/><rect x="16.6" y="13.2" width="2.2" height="2.2" fill="#ffb300"/></g></svg>
<svg style="position:absolute;left:0px;top:0px" width="1450" height="900" viewBox="0 0 1450 900"><g transform="translate(382,449)"><rect x="0" y="0" width="20" height="20" rx="1.6" fill="#66758c"/><rect x="2" y="2.2" width="7" height="7" rx="1.6" fill="#fff"/><rect x="4" y="4.2" width="3.1" height="3.1" fill="#66758c"/><rect x="9.9" y="2.2" width="1.2" height="9.1" fill="#fff"/><rect x="12" y="2.2" width="1.8" height="9.1" fill="#fff"/><rect x="14.9" y="2.2" width="1.3" height="9.1" fill="#fff"/><rect x="2" y="12.2" width="7" height="1.8" fill="#fff"/><rect x="2" y="15.3" width="4.5" height="1.1" fill="#fff"/><rect x="12" y="12.2" width="4.4" height="2.7" fill="#fff"/><rect x="12" y="16.3" width="4.4" height="2.8" fill="#fff"/><circle cx="1.5" cy="1.5" r="0.5" fill="#fff" fill-opacity="0.7"/><circle cx="18.5" cy="1.5" r="0.5" fill="#fff" fill-opacity="0.7"/><circle cx="1.5" cy="18.5" r="0.5" fill="#fff" fill-opacity="0.7"/><circle cx="18.5" cy="18.5" r="0.5" fill="#fff" fill-opacity="0.7"/></g></svg>
<div style="position:absolute;left:759.40px;top:201px;font-size:13px;line-height:21px;color:#404040;white-space:nowrap;letter-spacing:0.156px;">Mobile Storage Usage</div>
<div style="position:absolute;left:779.20px;top:259px;font-size:20px;line-height:24px;color:#383838;white-space:nowrap;font-weight:700;letter-spacing:0.300px;transform:scaleX(1.0489);transform-origin:0 0;">34</div>
<div style="position:absolute;left:779.20px;top:288px;font-size:13px;line-height:21px;color:#999;white-space:nowrap;letter-spacing:0.086px;">Total Usage</div>
<div style="position:absolute;left:779px;top:344px;width:612px;height:1px;background:#ebebeb;"></div>
<svg style="position:absolute;left:0px;top:0px" width="1450" height="900" viewBox="0 0 1450 900"><path d="M836.39,478.03 A47,47 0 1 1 830.50,384.40 L830.50,407.50 A23.9,23.9 0 1 0 833.50,455.11 Z" fill="#1569fa" stroke="#1569fa" stroke-width="0.3"/><path d="M830.5,384.4 A47,47 0 0 1 877.29,427.00 L853.99,427.00 A23.9,23.9 0 0 0 830.5,407.5 Z" fill="#fa8c10"/><path d="M877.29,427.00 A47,47 0 0 1 836.39,478.03 L833.50,455.11 A23.9,23.9 0 0 0 853.99,427.00 Z" fill="#4cae85"/></svg>
<div style="position:absolute;left:958px;top:410px;width:40px;height:40px;background:#f6f9fe;"></div>
<div style="position:absolute;left:1110px;top:410px;width:40px;height:40px;background:#f6f9fe;"></div>
<div style="position:absolute;left:1275px;top:410px;width:40px;height:40px;background:#f6f9fe;"></div>
<svg style="position:absolute;left:0px;top:0px" width="1450" height="900" viewBox="0 0 1450 900"><path d="M973.9499999999999,425.59999999999997 V418.84999999999997 H983.4499999999999 V425.59999999999997" fill="#fff" stroke="#66758c" stroke-width="1.3"/><rect x="976.5" y="421.4" width="1.4" height="1.3" fill="#66758c"/><rect x="979.4999999999999" y="421.4" width="1.4" height="1.3" fill="#66758c"/><rect x="971.9" y="425.7" width="13.7" height="16.1" rx="0.9" fill="#0672d6"/></svg>
<svg style="position:absolute;left:0px;top:0px" width="1450" height="900" viewBox="0 0 1450 900"><path d="M1124.45,425.4 V418.84999999999997 H1133.9499999999998 V425.4" fill="#fff" stroke="#66758c" stroke-width="1.3"/><rect x="1127.0" y="421.4" width="1.4" height="1.3" fill="#66758c"/><rect x="1130.0" y="421.4" width="1.4" height="1.3" fill="#66758c"/><rect x="1122.2" y="425.3" width="13.0" height="14.9" rx="0.9" fill="#0672d6"/><path d="M1134.1,435.2 L1131.7,441.2 L1134.1,440.2 L1135.4,442.0 L1136.7,436.2 Z M1138.9,435.2 L1141.3,441.2 L1138.9,440.2 L1137.6,442.0 L1136.3,436.2 Z" fill="#4caf50" stroke="#fff" stroke-width="1" paint-order="stroke"/><circle cx="1136.5" cy="431.2" r="7" fill="#fff"/><circle cx="1136.5" cy="431.2" r="5.8" fill="#4caf50"/></svg>
<svg style="position:absolute;left:0px;top:0px" width="1450" height="900" viewBox="0 0 1450 900"><path d="M1289.45,425.4 V418.84999999999997 H1298.9499999999998 V425.4" fill="#fff" stroke="#66758c" stroke-width="1.3"/><rect x="1292.0" y="421.4" width="1.4" height="1.3" fill="#66758c"/><rect x="1295.0" y="421.4" width="1.4" height="1.3" fill="#66758c"/><rect x="1287.2" y="425.3" width="13.0" height="14.9" rx="0.9" fill="#0672d6"/><g stroke-linecap="butt"><circle cx="1303.5" cy="432.8" r="4.7" fill="#fff"/><line x1="1303.5" y1="432.8" x2="1293.8" y2="441.2" stroke="#fff" stroke-width="5"/><line x1="1303.5" y1="432.8" x2="1293.8" y2="441.2" stroke="#ffb300" stroke-width="3"/><line x1="1297.49" y1="438.01" x2="1299.19" y2="439.97" stroke="#ffb300" stroke-width="1.6"/><line x1="1295.55" y1="439.69" x2="1297.25" y2="441.65" stroke="#ffb300" stroke-width="1.6"/><circle cx="1303.5" cy="432.8" r="3.7" fill="#ffb300"/><circle cx="1305.0" cy="431.3" r="1.1" fill="#fff"/></g></svg>
<div style="position:absolute;left:1013.20px;top:409px;font-size:12.5px;line-height:20px;color:#333;white-space:nowrap;font-weight:700;letter-spacing:-0.300px;transform:scaleX(0.8766);transform-origin:0 0;">21</div>
<div style="position:absolute;left:1013.20px;top:431px;font-size:13px;line-height:21px;color:#666;white-space:nowrap;letter-spacing:0.078px;">Ordinary</div>
<div style="position:absolute;left:1165.20px;top:409px;font-size:12.5px;line-height:20px;color:#333;white-space:nowrap;font-weight:700;transform:scaleX(0.9802);transform-origin:0 0;">6</div>
<div style="position:absolute;left:1165.20px;top:431px;font-size:13px;line-height:21px;color:#666;white-space:nowrap;">Authorized</div>
<div style="position:absolute;left:1330.00px;top:409px;font-size:12.5px;line-height:20px;color:#333;white-space:nowrap;font-weight:700;transform:scaleX(0.9369);transform-origin:0 0;">7</div>
<div style="position:absolute;left:1330.00px;top:431px;font-size:13px;line-height:21px;color:#666;white-space:nowrap;letter-spacing:-0.058px;">Encryption</div>
<div style="position:absolute;left:39.40px;top:548px;font-size:13px;line-height:21px;color:#404040;white-space:nowrap;letter-spacing:-0.120px;">Hardware Changes</div>
<div style="position:absolute;left:59.70px;top:608px;font-size:20px;line-height:24px;color:#383838;white-space:nowrap;font-weight:700;letter-spacing:-0.300px;transform:scaleX(0.9087);transform-origin:0 0;">18</div>
<div style="position:absolute;left:59.70px;top:637px;font-size:13px;line-height:21px;color:#999;white-space:nowrap;letter-spacing:-0.180px;">Total Events</div>
<div style="position:absolute;left:59px;top:690px;width:612px;height:1px;background:#ebebeb;"></div>
<svg style="position:absolute;left:0px;top:0px" width="1450" height="900" viewBox="0 0 1450 900"><path d="M115.27,824.92 A47,47 0 1 1 109.30,731.30 L109.30,754.40 A23.9,23.9 0 1 0 112.34,802.01 Z" fill="#1569fa" stroke="#1569fa" stroke-width="0.3"/><path d="M109.30,731.30 A47,47 0 0 1 141.95,744.49 L125.90,761.11 A23.9,23.9 0 0 0 109.30,754.40 Z" fill="#fa8c10" stroke="#fa8c10" stroke-width="0.3"/><path d="M141.95,744.49 A47,47 0 0 1 115.27,824.92 L112.34,802.01 A23.9,23.9 0 0 0 125.90,761.11 Z" fill="#4cae85" stroke="#4cae85" stroke-width="0.3"/></svg>
<div style="position:absolute;left:195px;top:741px;width:6px;height:6px;border-radius:50%;background:#1569fa"></div>
<div style="position:absolute;left:235.40px;top:733px;font-size:13px;line-height:21px;color:#777;white-space:nowrap;letter-spacing:-0.233px;">New</div>
<div style="position:absolute;left:195px;top:776px;width:6px;height:6px;border-radius:50%;background:#4cae85"></div>
<div style="position:absolute;left:235.40px;top:768px;font-size:13px;line-height:21px;color:#777;white-space:nowrap;letter-spacing:-0.300px;transform:scaleX(0.9845);transform-origin:0 0;">Remove</div>
<div style="position:absolute;left:195px;top:811px;width:6px;height:6px;border-radius:50%;background:#fa8c10"></div>
<div style="position:absolute;left:235.40px;top:803px;font-size:13px;line-height:21px;color:#777;white-space:nowrap;letter-spacing:-0.300px;transform:scaleX(0.9768);transform-origin:0 0;">Changes</div>
<div style="position:absolute;left:357px;top:741px;width:1px;height:76px;background:#ebebeb;"></div>
<svg style="position:absolute;left:0px;top:0px" width="1450" height="900" viewBox="0 0 1450 900"><g transform="translate(432,728)"><path d="M1.4,5 Q0,5 0,6.6 V14.4 Q0,16 1.6,16 H18.4 Q20,16 20,14.4 V6.6 Q20,5 18.6,5 L18,5.2 V8 Q18,11.2 15,11.2 H5 Q2,11.2 2,8 V5.2 Z" fill="#66758c"/><rect x="5.5" y="0.5" width="9" height="4" fill="#fff" stroke="#66758c" stroke-width="1"/><path d="M3.8,3.8 H16.2 V8 Q16.2,9.8 14.4,9.8 H5.6 Q3.8,9.8 3.8,8 Z" fill="#0672d6"/><path d="M1.2,14 L2.6,12 L4,14 Z" fill="#fff"/><rect x="4.6" y="14.6" width="9.9" height="4.9" fill="#fff" stroke="#66758c" stroke-width="1"/><rect x="7" y="16.5" width="5.4" height="1.3" rx="0.6" fill="#c3c8d2"/></g></svg>
<svg style="position:absolute;left:0px;top:0px" width="1450" height="900" viewBox="0 0 1450 900"><g transform="translate(432,769)"><path d="M1,0 H19 Q20,0 20,1 V4.6 L18.2,6.4 L20,8.2 V15 Q20,16 19,16 H1 Q0,16 0,15 V8.2 L1.8,6.4 L0,4.6 V1 Q0,0 1,0 Z" fill="#4caf50"/><rect x="4" y="3.2" width="2.2" height="7.6" fill="#fff"/><rect x="9" y="3.2" width="2.2" height="7.6" fill="#fff"/><rect x="14" y="3.2" width="2.2" height="7.6" fill="#fff"/><rect x="1.3" y="13.2" width="2.2" height="2.2" fill="#ffb300"/><rect x="5.1" y="13.2" width="2.2" height="2.2" fill="#ffb300"/><rect x="8.9" y="13.2" width="2.2" height="2.2" fill="#ffb300"/><rect x="12.8" y="13.2" width="2.2" height="2.2" fill="#ffb300"/><rect x="16.6" y="13.2" width="2.2" height="2.2" fill="#ffb300"/></g></svg>
<svg style="position:absolute;left:0px;top:0px" width="1450" height="900" viewBox="0 0 1450 900"><g transform="translate(434,806.5)"><rect x="0" y="0" width="17" height="20" rx="1.6" fill="#0672d6"/><circle cx="8.5" cy="9" r="7" fill="#fff"/><circle cx="8.5" cy="9" r="3.2" fill="none" stroke="#66758c" stroke-width="0.6"/><circle cx="8.5" cy="9" r="0.9" fill="#66758c"/><circle cx="2.4" cy="2.2" r="0.75" fill="#fff"/><circle cx="14.6" cy="2.2" r="0.75" fill="#fff"/><circle cx="2.4" cy="18.2" r="0.75" fill="#fff"/><circle cx="14.6" cy="18.2" r="0.75" fill="#fff"/></g></svg>
<div style="position:absolute;left:469.60px;top:727px;font-size:13px;line-height:21px;color:#777;white-space:nowrap;letter-spacing:-0.255px;">Printers</div>
<div style="position:absolute;left:653.80px;top:728px;font-size:12.5px;line-height:20px;color:#333;white-space:nowrap;font-weight:700;transform:scaleX(0.7063);transform-origin:0 0;">1</div>
<div style="position:absolute;left:469.60px;top:766px;font-size:13px;line-height:21px;color:#777;white-space:nowrap;letter-spacing:0.254px;">Memory</div>
<div style="position:absolute;left:654.60px;top:768px;font-size:12.5px;line-height:20px;color:#333;white-space:nowrap;font-weight:700;transform:scaleX(0.9514);transform-origin:0 0;">3</div>
<div style="position:absolute;left:469.60px;top:806px;font-size:13px;line-height:21px;color:#777;white-space:nowrap;letter-spacing:0.007px;">Hard Drive</div>
<div style="position:absolute;left:654.00px;top:807px;font-size:12.5px;line-height:20px;color:#333;white-space:nowrap;font-weight:700;transform:scaleX(1.0378);transform-origin:0 0;">8</div>
<div style="position:absolute;left:759.40px;top:548px;font-size:13px;line-height:21px;color:#404040;white-space:nowrap;letter-spacing:0.194px;">Mobile Storage Operations</div>
<div style="position:absolute;left:779.70px;top:606px;font-size:20px;line-height:24px;color:#383838;white-space:nowrap;font-weight:700;letter-spacing:0.050px;">757</div>
<div style="position:absolute;left:779.50px;top:635px;font-size:13px;line-height:21px;color:#999;white-space:nowrap;letter-spacing:0.229px;">Total number of operation files</div>
<svg style="position:absolute;left:0px;top:0px" width="1450" height="900" viewBox="0 0 1450 900"><circle cx="789" cy="712" r="8.9" fill="#0672d6"/><path d="M789,716.8 V707.8 M784.4,712 L789,707.4 L793.6,712" fill="none" stroke="#fff" stroke-width="2.1" stroke-linecap="round" stroke-linejoin="round"/><circle cx="863.2" cy="712" r="9.1" fill="#4caf50"/><path d="M863.2,707.2 V716.2 M858.6,712 L863.2,716.6 L867.8,712" fill="none" stroke="#fff" stroke-width="2.1" stroke-linecap="round" stroke-linejoin="round"/></svg>
<div style="position:absolute;left:809.50px;top:703px;font-size:12.5px;line-height:20px;color:#333;white-space:nowrap;font-weight:700;letter-spacing:-0.300px;transform:scaleX(0.9420);transform-origin:0 0;">591</div>
<div style="position:absolute;left:886.50px;top:703px;font-size:12.5px;line-height:20px;color:#333;white-space:nowrap;font-weight:700;letter-spacing:0.300px;transform:scaleX(1.0058);transform-origin:0 0;">166</div>
<div style="position:absolute;left:779px;top:738px;width:610px;height:85px;border:1px solid #e8e8e8;background:#fff"></div>
<div style="position:absolute;left:782px;top:778px;width:9px;height:1px;background:#1558e6;"></div>
<div style="position:absolute;left:782px;top:784px;width:9px;height:1px;background:#3d9a6e;"></div>
<div style="position:absolute;left:808px;top:778px;width:9px;height:1px;background:#1558e6;"></div>
<div style="position:absolute;left:808px;top:784px;width:9px;height:1px;background:#3d9a6e;"></div>
<div style="position:absolute;left:834px;top:778px;width:9px;height:1px;background:#1558e6;"></div>
<div style="position:absolute;left:834px;top:784px;width:9px;height:1px;background:#3d9a6e;"></div>
<div style="position:absolute;left:860px;top:778px;width:9px;height:1px;background:#1558e6;"></div>
<div style="position:absolute;left:860px;top:784px;width:9px;height:1px;background:#3d9a6e;"></div>
<div style="position:absolute;left:886px;top:778px;width:9px;height:1px;background:#1558e6;"></div>
<div style="position:absolute;left:886px;top:784px;width:9px;height:1px;background:#3d9a6e;"></div>
<div style="position:absolute;left:912px;top:778px;width:9px;height:1px;background:#1558e6;"></div>
<div style="position:absolute;left:912px;top:784px;width:9px;height:1px;background:#3d9a6e;"></div>
<div style="position:absolute;left:938px;top:778px;width:9px;height:1px;background:#1558e6;"></div>
<div style="position:absolute;left:938px;top:784px;width:9px;height:1px;background:#3d9a6e;"></div>
<div style="position:absolute;left:964px;top:764px;width:9px;height:14px;background:#1569fa;"></div>
<div style="position:absolute;left:964px;top:784px;width:9px;height:6px;background:#4cae85;"></div>
<div style="position:absolute;left:990px;top:752px;width:9px;height:26px;background:#1569fa;"></div>
<div style="position:absolute;left:990px;top:784px;width:9px;height:19px;background:#4cae85;"></div>
<div style="position:absolute;left:1016px;top:755px;width:9px;height:23px;background:#1569fa;"></div>
<div style="position:absolute;left:1016px;top:784px;width:9px;height:31px;background:#4cae85;"></div>
<div style="position:absolute;left:1042px;top:778px;width:9px;height:1px;background:#1558e6;"></div>
<div style="position:absolute;left:1042px;top:784px;width:9px;height:1px;background:#3d9a6e;"></div>
<div style="position:absolute;left:1068px;top:778px;width:9px;height:1px;background:#1558e6;"></div>
<div style="position:absolute;left:1068px;top:784px;width:9px;height:1px;background:#3d9a6e;"></div>
<div style="position:absolute;left:1094px;top:749px;width:9px;height:30px;background:#1569fa;"></div>
<div style="position:absolute;left:1094px;top:785px;width:9px;height:31px;background:#4cae85;"></div>
<div style="position:absolute;left:1120px;top:755px;width:9px;height:23px;background:#1569fa;"></div>
<div style="position:absolute;left:1120px;top:784px;width:9px;height:31px;background:#4cae85;"></div>
<div style="position:absolute;left:1146px;top:748px;width:9px;height:30px;background:#1569fa;"></div>
<div style="position:absolute;left:1146px;top:784px;width:9px;height:31px;background:#4cae85;"></div>
<div style="position:absolute;left:1172px;top:748px;width:9px;height:30px;background:#1569fa;"></div>
<div style="position:absolute;left:1172px;top:784px;width:9px;height:23px;background:#4cae85;"></div>
<div style="position:absolute;left:1198px;top:778px;width:9px;height:1px;background:#1558e6;"></div>
<div style="position:absolute;left:1198px;top:784px;width:9px;height:1px;background:#3d9a6e;"></div>
<div style="position:absolute;left:1224px;top:758px;width:9px;height:20px;background:#1569fa;"></div>
<div style="position:absolute;left:1224px;top:784px;width:9px;height:27px;background:#4cae85;"></div>
<div style="position:absolute;left:1250px;top:748px;width:9px;height:30px;background:#1569fa;"></div>
<div style="position:absolute;left:1250px;top:784px;width:9px;height:31px;background:#4cae85;"></div>
<div style="position:absolute;left:1276px;top:778px;width:9px;height:1px;background:#1558e6;"></div>
<div style="position:absolute;left:1276px;top:784px;width:9px;height:1px;background:#3d9a6e;"></div>
<div style="position:absolute;left:1302px;top:778px;width:9px;height:1px;background:#1558e6;"></div>
<div style="position:absolute;left:1302px;top:784px;width:9px;height:1px;background:#3d9a6e;"></div>
<div style="position:absolute;left:1328px;top:778px;width:9px;height:1px;background:#1558e6;"></div>
<div style="position:absolute;left:1328px;top:784px;width:9px;height:1px;background:#3d9a6e;"></div>
<div style="position:absolute;left:1354px;top:778px;width:9px;height:1px;background:#1558e6;"></div>
<div style="position:absolute;left:1354px;top:784px;width:9px;height:1px;background:#3d9a6e;"></div>
<div style="position:absolute;left:1380px;top:778px;width:9px;height:1px;background:#1558e6;"></div>
<div style="position:absolute;left:1380px;top:784px;width:9px;height:1px;background:#3d9a6e;"></div>
<div style="position:absolute;left:0px;top:875px;width:1450px;height:25px;background:#0f6cbd;"></div>
<div style="position:absolute;left:9.70px;top:876px;font-size:13px;line-height:21px;color:#fff;white-space:nowrap;letter-spacing:-0.300px;transform:scaleX(0.9651);transform-origin:0 0;">Ready</div>
<div style="position:absolute;left:1192.40px;top:876px;font-size:13px;line-height:21px;color:#fff;white-space:nowrap;letter-spacing:-0.106px;">Task Center</div>
<div style="position:absolute;left:1299.40px;top:876px;font-size:13px;line-height:21px;color:#fff;white-space:nowrap;letter-spacing:-0.044px;">11150 unread messages</div>
<svg style="position:absolute;left:0px;top:0px" width="1450" height="900" viewBox="0 0 1450 900"><g fill="none" stroke="#4da27b" stroke-width="2.3"><path d="M1178.55,879 V890.6 M1172.7,884.3 L1178.55,890.9 L1184.4,884.3" stroke-linejoin="miter"/><line x1="1172" y1="893.9" x2="1185" y2="893.9"/></g><rect x="1277.7" y="881.8" width="14.6" height="10.4" fill="#fff" stroke="#6b7a90" stroke-width="1"/><rect x="1289" y="883.2" width="2" height="2.6" fill="#0f6cbd"/><rect x="1280.4" y="886.9" width="7.8" height="1" fill="#6b7a90"/><rect x="1280.4" y="889" width="7.8" height="1" fill="#6b7a90"/></svg>
<div style="position:absolute;left:1px;top:173px;width:1px;height:702px;background:#fafafa;"></div>
<div style="position:absolute;left:1448px;top:173px;width:1px;height:702px;background:#fafafa;"></div>
<div style="position:absolute;left:0px;top:0px;width:1450px;height:1px;background:#0f6cbd;"></div>
<div style="position:absolute;left:0px;top:0px;width:1px;height:900px;background:#0f6cbd;"></div>
<div style="position:absolute;left:1449px;top:0px;width:1px;height:900px;background:#0f6cbd;"></div>
</body></html>
